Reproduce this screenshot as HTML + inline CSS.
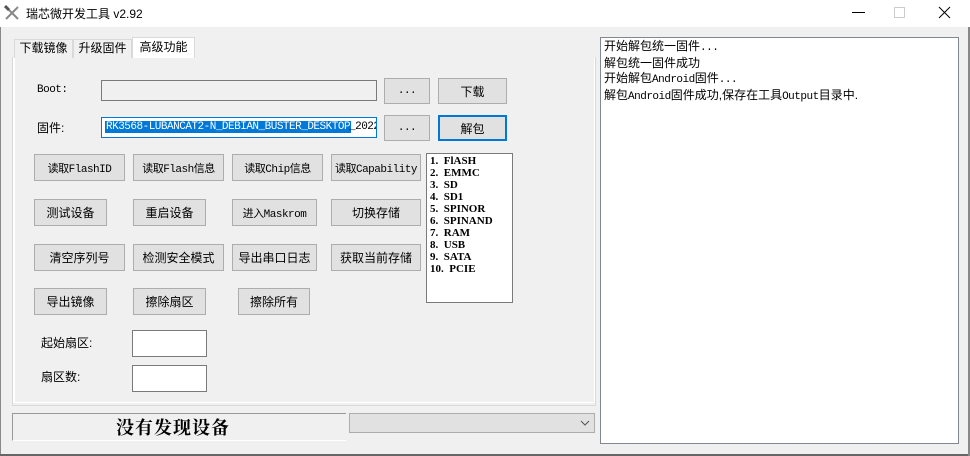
<!DOCTYPE html>
<html><head><meta charset="utf-8"><style>
*{box-sizing:border-box;margin:0;padding:0}
body{width:970px;height:456px;background:#f0f0f0;position:relative;overflow:hidden;font-family:"Liberation Sans","Noto Sans CJK SC",sans-serif;font-size:12px;color:#000}
.a{position:absolute;white-space:nowrap}
.btn{position:absolute;background:#e1e1e1;border:1px solid #adadad;display:flex;align-items:center;justify-content:center;font-size:12px;white-space:nowrap}
.m{font-family:"Liberation Mono","Noto Sans CJK SC",monospace;font-size:11px;letter-spacing:-0.5px}
.inp{position:absolute;background:#fff;border:1px solid #7a7a7a}
.tab{position:absolute;border:1px solid #d9d9d9;border-bottom:none;white-space:nowrap;text-align:center;overflow:hidden}
</style></head><body>
<div class="a" style="left:0;top:0;width:970px;height:27px;background:#fff"></div>
<svg class="a" style="left:4px;top:5px" width="16" height="16" viewBox="0 0 16 16"><path d="M2 2 L14 14 M14 2 L2 14" stroke="#888" stroke-width="2"/><path d="M1 1 L5 5" stroke="#555" stroke-width="3"/></svg>
<div class="a" style="left:26px;top:5px;font-size:12px">瑞芯微开发工具 v2.92</div>
<div class="a" style="top:12px;width:13px;height:1px;background:#000;left:852px"></div>
<div class="a" style="left:894px;top:7px;width:11px;height:11px;border:1px solid #ccc"></div>
<svg class="a" style="left:938px;top:6px" width="13" height="13"><path d="M1 1 L12 12 M12 1 L1 12" stroke="#000" stroke-width="1"/></svg>
<div class="a" style="left:0;top:27px;width:1px;height:429px;background:#888"></div>
<div class="a" style="left:0;top:454px;width:970px;height:2px;background:#666"></div>
<div class="a" style="left:968px;top:27px;width:2px;height:429px;background:#888"></div>

<!-- tabs -->
<div class="tab" style="left:14px;top:39px;width:59px;height:19px;background:#f0f0f0;line-height:17px">下载镜像</div>
<div class="tab" style="left:73px;top:39px;width:59px;height:19px;background:#f0f0f0;line-height:17px">升级固件</div>
<div class="tab" style="left:132px;top:37px;width:63px;height:21px;background:#fff;line-height:19px">高级功能</div>
<div class="a" style="left:12px;top:57px;width:584px;height:349px;border:1px solid #d9d9d9;border-top:none"></div>
<div class="a" style="left:13px;top:58px;width:582px;height:345px;border-right:1px solid #fff;border-bottom:1px solid #fff;border-left:2px solid #fff"></div>

<div class="a m" style="left:37px;top:84px">Boot:</div>
<div class="inp" style="left:101px;top:80px;width:276px;height:21px;background:#f0f0f0"></div>
<div class="btn m" style="left:384px;top:78px;width:46px;height:26px">...</div>
<div class="btn" style="left:438px;top:78px;width:69px;height:26px">下载</div>
<div class="a" style="left:37px;top:119px">固件:</div>
<div class="inp" style="left:101px;top:117px;width:276px;height:21px;border-color:#0078d7;overflow:hidden;white-space:nowrap"><span class="m" style="position:absolute;left:3px;top:3px;background:#0078d7;color:#fff;padding:0 1px">RK3568-LUBANCAT2-N_DEBIAN_BUSTER_DESKTOP</span><span class="m" style="position:absolute;left:247px;top:3px">_2022</span></div>
<div class="btn m" style="left:384px;top:115px;width:46px;height:26px">...</div>
<div class="btn" style="left:438px;top:115px;width:69px;height:26px;border:2px solid #0078d7">解包</div>

<div class="btn m" style="left:34px;top:154px;width:91px;height:27px">读取FlashID</div>
<div class="btn m" style="left:133px;top:154px;width:91px;height:27px">读取Flash信息</div>
<div class="btn m" style="left:232px;top:154px;width:91px;height:27px">读取Chip信息</div>
<div class="btn m" style="left:331px;top:154px;width:90px;height:27px">读取Capability</div>
<div class="btn" style="left:34px;top:199px;width:73px;height:27px">测试设备</div>
<div class="btn" style="left:133px;top:199px;width:73px;height:27px">重启设备</div>
<div class="btn m" style="left:232px;top:199px;width:85px;height:27px">进入Maskrom</div>
<div class="btn" style="left:331px;top:199px;width:90px;height:27px">切换存储</div>
<div class="btn" style="left:34px;top:244px;width:91px;height:27px">清空序列号</div>
<div class="btn" style="left:133px;top:244px;width:91px;height:27px">检测安全模式</div>
<div class="btn" style="left:232px;top:244px;width:85px;height:27px">导出串口日志</div>
<div class="btn" style="left:331px;top:244px;width:90px;height:27px">获取当前存储</div>
<div class="btn" style="left:34px;top:288px;width:73px;height:27px">导出镜像</div>
<div class="btn" style="left:133px;top:288px;width:73px;height:27px">擦除扇区</div>
<div class="btn" style="left:238px;top:288px;width:72px;height:27px">擦除所有</div>

<div class="inp" style="left:426px;top:153px;width:87px;height:150px;padding:1px 3px;line-height:12px;font-family:'Liberation Serif',serif;font-size:11px;font-weight:bold">1.&nbsp; FlASH<br>2.&nbsp; EMMC<br>3.&nbsp; SD<br>4.&nbsp; SD1<br>5.&nbsp; SPINOR<br>6.&nbsp; SPINAND<br>7.&nbsp; RAM<br>8.&nbsp; USB<br>9.&nbsp; SATA<br>10.&nbsp; PCIE</div>

<div class="a" style="left:41px;top:334px">起始扇区:</div>
<div class="inp" style="left:132px;top:330px;width:75px;height:27px"></div>
<div class="a" style="left:41px;top:368px">扇区数:</div>
<div class="inp" style="left:132px;top:365px;width:75px;height:27px"></div>

<div class="a" style="left:12px;top:413px;width:334px;height:28px;border-top:1px solid #999;border-left:1px solid #999;border-bottom:1px solid #fff;padding-left:103px;font-family:'Noto Serif CJK SC',serif;font-size:18px;font-weight:bold;line-height:27px;letter-spacing:1px">没有发现设备</div>
<div class="a" style="left:349px;top:413px;width:246px;height:20px;background:#e1e1e1;border:1px solid #adadad"></div>
<svg class="a" style="left:580px;top:420px" width="10" height="6"><path d="M1 1 L5 5 L9 1" stroke="#555" fill="none"/></svg>

<div class="inp" style="left:600px;top:37px;width:359px;height:407px;border-color:#828790;padding:1px 3px;line-height:15px;font-size:12px">
<div>开始解包统一固件<span class="m">...</span></div>
<div>解包统一固件成功</div>
<div>开始解包<span class="m">Android</span>固件<span class="m">...</span></div>
<div>解包<span class="m">Android</span>固件成功,保存在工具<span class="m">Output</span>目录中.</div>
</div>
</body></html>
